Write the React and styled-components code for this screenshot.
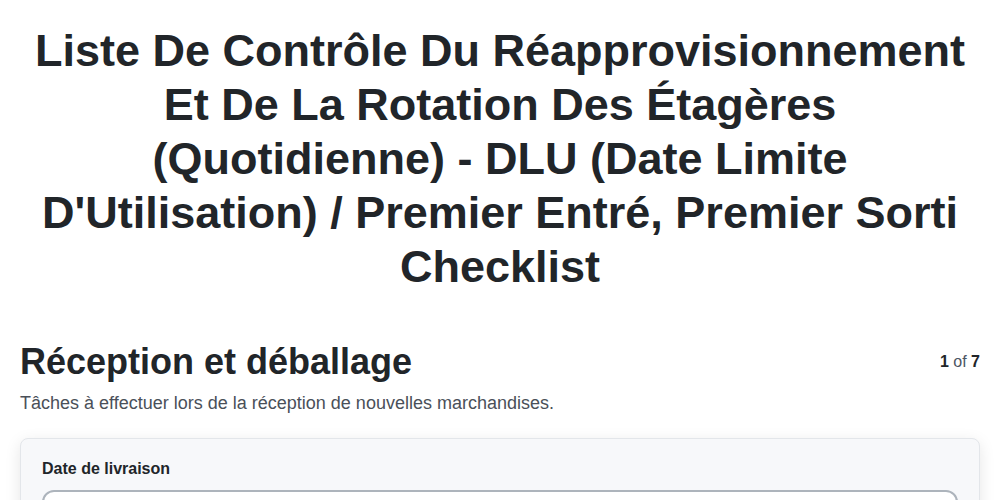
import React from 'react'
import styled, { createGlobalStyle } from 'styled-components';

const GlobalStyle = createGlobalStyle`
body{
    margin: 0;
    background-color: #fff;
    font-family: "Liberation Sans", Arial, sans-serif;
    color: #212529;
}
`;

const App = () => {
    return (
        <>
            <GlobalStyle />
            <Page>
                <Title>
                    Liste De Contrôle Du Réapprovisionnement Et De La Rotation Des Étagères (Quotidienne) - DLU (Date Limite D'Utilisation) / Premier Entré, Premier Sorti Checklist
                </Title>
                <SectionHeader>
                    <SectionTitle>Réception et déballage</SectionTitle>
                    <StepCounter><b>1</b> of <b>7</b></StepCounter>
                </SectionHeader>
                <SectionDesc>Tâches à effectuer lors de la réception de nouvelles marchandises.</SectionDesc>
                <Card>
                    <Field>
                        <Label htmlFor="delivery-date">Date de livraison</Label>
                        <Input id="delivery-date" type="text" />
                    </Field>
                </Card>
            </Page>
        </>
    )
}

export default App


const Page = styled.div`
padding: 24px 20px 40px;
`;

const Title = styled.h1`
max-width: 940px;
margin: 0 auto 46px;
text-align: center;
font-size: 45px;
line-height: 1.2;
font-weight: 700;
color: #212529;
`;

const SectionHeader = styled.div`
display: flex;
justify-content: space-between;
align-items: center;
`;

const SectionTitle = styled.h2`
margin: 0;
font-size: 36px;
line-height: 1.2;
font-weight: 700;
color: #212529;
`;

const StepCounter = styled.div`
font-size: 16px;
line-height: 1.5;
color: #4b5563;
b{
    color: #212529;
    font-weight: 700;
}
`;

const SectionDesc = styled.p`
margin: 7px 0 21px;
font-size: 18px;
line-height: 1.5;
color: #4a5059;
`;

const Card = styled.div`
background-color: #f7f8fa;
border: 1px solid #e3e6ea;
border-radius: 8px;
box-shadow: 0 4px 16px rgba(0, 0, 0, 0.1);
padding: 18px 21px 20px;
`;

const Field = styled.div`
display: flex;
flex-direction: column;
gap: 9px;
`;

const Label = styled.label`
font-size: 16px;
line-height: 1.5;
font-weight: 700;
color: #212529;
`;

const Input = styled.input`
box-sizing: border-box;
width: 100%;
height: 46px;
border: 2px solid #adb4bc;
border-radius: 12px;
background-color: #fff;
padding: 0 14px;
font-family: inherit;
font-size: 16px;
`;
